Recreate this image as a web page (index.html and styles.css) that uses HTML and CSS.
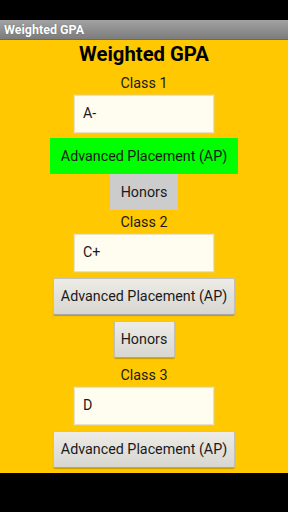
FILE: index.html
```html
<!DOCTYPE html>
<html>
<head>
<meta charset="utf-8">
<link rel="stylesheet" href="styles.css">
</head>
<body>
<div class="screen">
  <div class="status"></div>
  <div class="titlebar">Weighted GPA</div>
  <div class="content">
    <h1 class="heading">Weighted GPA</h1>

    <div class="label first">Class 1</div>
    <div class="field">A-</div>
    <div class="btn-green">Advanced Placement (AP)</div>
    <div class="btn-flat">Honors</div>

    <div class="label second">Class 2</div>
    <div class="field">C+</div>
    <div class="btn ap">Advanced Placement (AP)</div>
    <div class="btn honors">Honors</div>

    <div class="label third">Class 3</div>
    <div class="field">D</div>
    <div class="btn ap">Advanced Placement (AP)</div>
  </div>
  <div class="navbar"></div>
</div>
</body>
</html>
```

FILE: styles.css
```css
* { box-sizing: border-box; }
html, body { margin: 0; padding: 0; background: #000; }
.screen {
  width: 288px;
  height: 512px;
  display: flex;
  flex-direction: column;
  font-family: Roboto, "Noto Sans", sans-serif;
  overflow: hidden;
}
.status { height: 20px; background: #000; flex: none; }
.titlebar {
  height: 20px;
  flex: none;
  background: linear-gradient(#a2a2a2, #7c7c7c);
  color: #fff;
  font-weight: bold;
  font-size: 12.5px;
  line-height: 20px;
  padding-left: 4px;
  text-shadow: 0 0 1px #555;
  border-bottom: 1px solid #6a6a6a;
}
.content {
  height: 433px;
  flex: none;
  background: #ffc800;
  display: flex;
  flex-direction: column;
  align-items: center;
}
.heading {
  margin: 1px 0 0;
  font-size: 20.3px;
  line-height: 26px;
  font-weight: bold;
  color: #000;
}
.label {
  font-size: 14.3px;
  line-height: 19px;
  color: #1a1a1a;
}
.label.first { margin-top: 7px; }
.label.second { margin-top: 3px; }
.label.third { margin-top: 8px; }
.field {
  margin-top: 2px;
  width: 140px;
  height: 38px;
  background: #fffdf0;
  border: 1px solid #e8e2c4;
  box-shadow: 0 0 0 1px #f2cc40;
  padding-left: 8px;
  font-size: 14.3px;
  line-height: 34px;
  color: #1a1a1a;
}
.btn-green {
  margin-top: 5px;
  width: 188px;
  height: 36px;
  background: #00ff00;
  text-align: center;
  font-size: 14.3px;
  line-height: 36px;
  color: #1a1a1a;
}
.btn-flat {
  width: 68px;
  height: 36px;
  background: #cccccc;
  text-align: center;
  font-size: 14.3px;
  line-height: 36px;
  color: #1a1a1a;
}
.btn {
  height: 37px;
  background: linear-gradient(#ecebe6, #d8d6d0);
  border: 1px solid #c2c0ba;
  border-bottom-color: #a8a6a0;
  border-radius: 2px;
  box-shadow: 0 1px 1px rgba(120, 100, 0, 0.45);
  text-align: center;
  font-size: 14.3px;
  line-height: 35px;
  color: #1a1a1a;
}
.btn.ap { width: 182px; margin-top: 6px; }
.btn.honors { width: 61px; margin-top: 6px; }
.navbar { flex: 1; background: #000; }
```
